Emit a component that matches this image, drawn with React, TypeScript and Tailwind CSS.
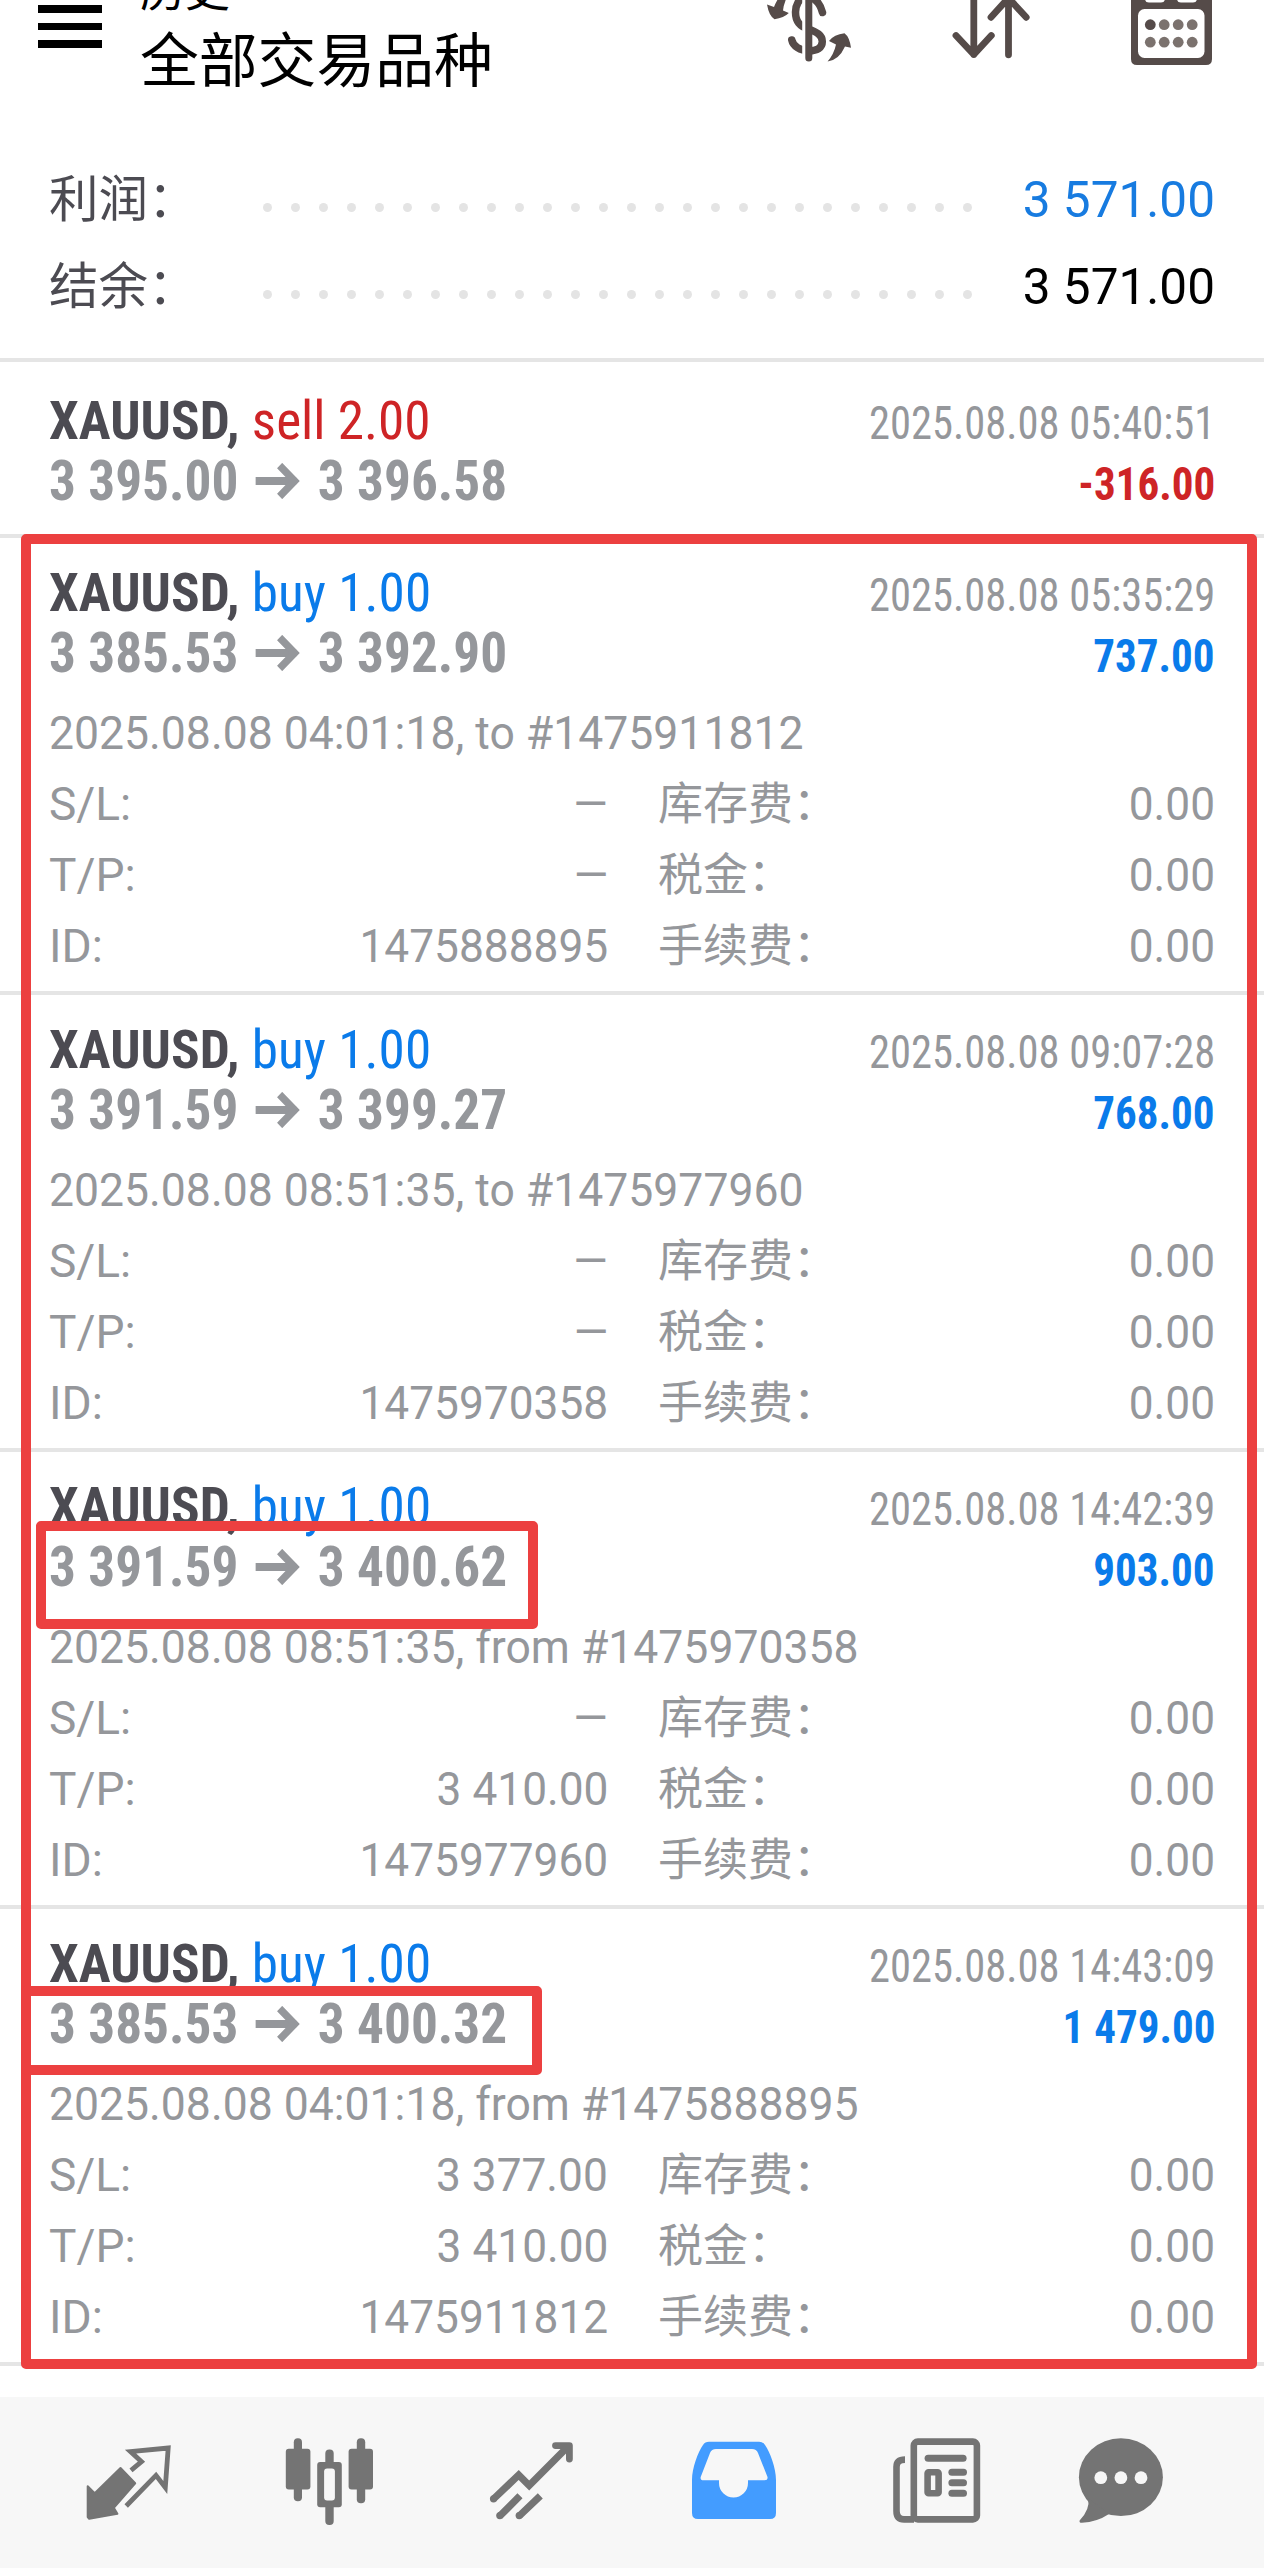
import type { ReactNode } from 'react'

type Trade = {
  side: 'buy' | 'sell'
  volume: string
  open: string
  close: string
  time: string
  profit: string
  details?: {
    note: string
    sl: string
    tp: string
    id: string
  }
}

const trades: Trade[] = [
  {
    side: 'sell',
    volume: '2.00',
    open: '3 395.00',
    close: '3 396.58',
    time: '2025.08.08 05:40:51',
    profit: '-316.00',
  },
  {
    side: 'buy',
    volume: '1.00',
    open: '3 385.53',
    close: '3 392.90',
    time: '2025.08.08 05:35:29',
    profit: '737.00',
    details: { note: '2025.08.08 04:01:18, to #1475911812', sl: '—', tp: '—', id: '1475888895' },
  },
  {
    side: 'buy',
    volume: '1.00',
    open: '3 391.59',
    close: '3 399.27',
    time: '2025.08.08 09:07:28',
    profit: '768.00',
    details: { note: '2025.08.08 08:51:35, to #1475977960', sl: '—', tp: '—', id: '1475970358' },
  },
  {
    side: 'buy',
    volume: '1.00',
    open: '3 391.59',
    close: '3 400.62',
    time: '2025.08.08 14:42:39',
    profit: '903.00',
    details: { note: '2025.08.08 08:51:35, from #1475970358', sl: '—', tp: '3 410.00', id: '1475977960' },
  },
  {
    side: 'buy',
    volume: '1.00',
    open: '3 385.53',
    close: '3 400.32',
    time: '2025.08.08 14:43:09',
    profit: '1 479.00',
    details: { note: '2025.08.08 04:01:18, from #1475888895', sl: '3 377.00', tp: '3 410.00', id: '1475911812' },
  },
]

const Header = () => {
  return (
    <header className="flex h-[157px] items-start pl-[38px] pr-[50px] text-black">
      <div className="mt-[5px] flex w-[64px] flex-col gap-[10px]">
        <span className="h-[7.6px] bg-black" />
        <span className="h-[7.6px] bg-black" />
        <span className="h-[7.6px] bg-black" />
      </div>
      <div className="-mt-[38px] ml-[38px] grow">
        <div className="text-[45px] leading-[60px]">历史</div>
        <h1 className="text-[58.8px] leading-[80px]">全部交易品种</h1>
      </div>
      <svg className="h-[66px] w-[90px]" viewBox="764 0 90 66" fill="#554b49">
        <path
          d="M822.5 12.5 C820 3 815 -3 806 -3 C799 -3 795.5 6 795.5 12 C795.5 22 800 26 808 29 C817 32 822.3 35 822.3 41.5 C822.3 48 817 50.8 809 50.8 C800 50.8 793 46 791.8 40"
          fill="none"
          stroke="#554b49"
          strokeWidth="7.5"
          strokeLinecap="round"
        />
        <rect x="802.2" y="-5" width="4" height="64" fill="#fff" />
        <rect x="805.3" y="-6" width="7" height="67.5" rx="3.5" />
        <path d="M778.5 -2 H786.5 Q783.5 5 783 10.5 L788.8 13 Q784 18 774.5 19.2 Q769 16 767 4.5 L774 7 Q775 4 778.5 -2Z" />
        <path d="M844.5 33.3 Q849.5 37 851 47.8 L845 46.5 Q839 60 827.6 61.5 Q834 54 836 44.5 L829 41 Q834 34.5 844.5 33.3Z" />
      </svg>
      <svg
        className="ml-[98px] h-[66px] w-[80px]"
        viewBox="952 0 80 66"
        fill="none"
        stroke="#554b49"
        strokeWidth="6.8"
        strokeLinecap="round"
        strokeLinejoin="round"
      >
        <path d="M973.8 -5 V54.5 M956 35.5 L973.8 54.5 L991.3 35.5" />
        <path d="M1008.5 54.8 V-2 M991 17.3 L1008.5 -2 L1026.2 17.3" />
      </svg>
      <svg className="ml-[99px] h-[66px] w-[83px]" viewBox="1131 0 83 66" fill="#7b726e">
        <path d="M1131 -5 H1212 V59 Q1212 65 1206 65 H1137 Q1131 65 1131 59Z" fill="#554b49" />
        <rect x="1138" y="9" width="66.5" height="49" rx="6.5" fill="#fff" />
        <rect x="1145" y="-8" width="20" height="10.5" rx="4" fill="#fff" />
        <rect x="1177" y="-8" width="20" height="10.5" rx="4" fill="#fff" />
        <circle cx="1150.3" cy="24.7" r="5.4" fill="#554b49" />
        <circle cx="1164.2" cy="24.7" r="5.4" />
        <circle cx="1178.2" cy="24.7" r="5.4" />
        <circle cx="1192.2" cy="24.7" r="5.4" />
        <circle cx="1150.3" cy="42.2" r="5.4" />
        <circle cx="1164.2" cy="42.2" r="5.4" />
        <circle cx="1178.2" cy="42.2" r="5.4" />
        <circle cx="1192.2" cy="42.2" r="5.4" />
      </svg>
    </header>
  )
}

const SummaryRow = ({ label, value, color }: { label: string; value: string; color: string }) => {
  return (
    <div className="flex h-[87px] items-center text-[49.5px] leading-[87px]">
      <span className="w-[214px] text-[#4c4b52]">{label}</span>
      <span className="mt-[13px] flex gap-[19px]">
        {Array.from({ length: 26 }, (_, i) => (
          <span key={i} className="size-[9px] rounded-full bg-[#e4e4e4]" />
        ))}
      </span>
      <span className={`grow text-right ${color}`}>{value}</span>
    </div>
  )
}

const DetailRow = ({ label, value, feeLabel }: { label: string; value: string; feeLabel: string }) => {
  return (
    <div className="flex h-[71px] leading-[71px]">
      <span>{label}</span>
      <span className="grow origin-right scale-x-[0.962] text-right">{value}</span>
      <span className="ml-[50px] w-[360px] text-[45px]">{feeLabel}</span>
      <span className="w-[197px] origin-right scale-x-[0.962] text-right">0.00</span>
    </div>
  )
}

const PriceArrow = () => (
  <svg className="mx-[18px] h-[36px] w-[46px]" viewBox="0 0 46 36" fill="none" stroke="#95979b" strokeWidth="8">
    <path d="M0 18 H42" />
    <path d="M25 2.5 L40.5 18 L25 33.5" strokeWidth="7.5" />
  </svg>
)

const TradeCard = ({ trade }: { trade: Trade }) => {
  const sideColor = trade.side === 'buy' ? 'text-[#0a7bea]' : 'text-[#ce2426]'
  const profitColor = trade.profit.startsWith('-') ? 'text-[#ce2426]' : 'text-[#0a7bea]'
  const { details } = trade

  return (
    <article
      className={`border-b-4 border-[#e5e5e5] px-[49px] text-[#95979b] ${details ? 'h-[457px] pt-[22px]' : 'h-[176px] pt-[26px]'}`}
    >
      <div className="flex h-[61px] items-baseline justify-between font-['Roboto_Condensed'] leading-[64px]">
        <span className="origin-left scale-x-[0.977] text-[54.5px]">
          <b className="text-[#4c4b52]">XAUUSD,</b>{' '}
          <span className={sideColor}>
            {trade.side} {trade.volume}
          </span>
        </span>
        <time className="origin-right scale-x-[0.925] text-[46px]">{trade.time}</time>
      </div>
      <div className="flex h-[60px] items-baseline justify-between font-['Roboto_Condensed'] font-bold leading-[64px]">
        <span className="flex origin-left scale-x-[0.969] items-center text-[55px]">
          {trade.open}
          <PriceArrow />
          {trade.close}
        </span>
        <span className={`origin-right scale-x-[0.936] text-[46px] ${profitColor}`}>{trade.profit}</span>
      </div>
      {details && (
        <div className="mt-[16.5px] text-[46px]">
          <p className="h-[71px] origin-left scale-x-[0.968] leading-[71px]">{details.note}</p>
          <DetailRow label="S/L:" value={details.sl} feeLabel="库存费：" />
          <DetailRow label="T/P:" value={details.tp} feeLabel="税金：" />
          <DetailRow label="ID:" value={details.id} feeLabel="手续费：" />
        </div>
      )}
    </article>
  )
}

const NavIcon = ({ active, className, children }: { active?: boolean; className?: string; children: ReactNode }) => (
  <svg
    className={`size-[100px] ${active ? 'text-[#439cff]' : 'text-[#747474]'} ${className ?? ''}`}
    viewBox="0 0 100 100"
    fill="currentColor"
  >
    {children}
  </svg>
)

const BottomNav = () => {
  return (
    <nav className="flex h-[171px] gap-[102px] bg-[#f7f7f7] pl-[78px] pt-[35px]">
      <NavIcon>
        <path
          d="M9.7 54.3 L16.7 61.3 L42.5 36 L57.2 51.3 L35.8 75.8 L39.4 81.8 L11.2 86.8 L9.7 85Z"
          stroke="currentColor"
          strokeWidth="2"
          strokeLinejoin="round"
        />
        <path
          d="M53 38.3 L63.5 29.7 L52.5 19.6 L90.2 16 L87.3 55.5 L78 43.3 L48.2 74"
          fill="none"
          stroke="currentColor"
          strokeWidth="4.8"
        />
      </NavIcon>
      <NavIcon>
        <rect x="13.8" y="6.3" width="8.2" height="63" rx="4" />
        <rect x="5.8" y="16.7" width="24.6" height="40.8" rx="3" />
        <rect x="45.3" y="17.5" width="8.4" height="75.5" rx="4" />
        <rect x="37.2" y="30" width="24.6" height="45.3" rx="3" />
        <rect x="44.1" y="36.5" width="10.8" height="32" rx="3" fill="#f7f7f7" />
        <rect x="76.8" y="6.3" width="8.4" height="65" rx="4" />
        <rect x="68.6" y="16.7" width="24.4" height="40.8" rx="3" />
      </NavIcon>
      <NavIcon>
        <g fill="none" stroke="currentColor" strokeWidth="7.2">
          <path d="M11.5 67 L36.7 43 L47.2 53.5 L86 14.5" />
          <path d="M73.5 13.6 H87.4 V27" strokeWidth="6.8" strokeLinecap="round" strokeLinejoin="round" />
          <path d="M17.8 84 L38 63.8 M37.2 84 L58.3 63.8" />
        </g>
        <circle cx="11.5" cy="66.8" r="3.6" />
        <circle cx="17.8" cy="83.6" r="3.6" />
        <circle cx="37.2" cy="83.6" r="3.6" />
      </NavIcon>
      <NavIcon active>
        <path
          fillRule="evenodd"
          d="M8 48 C8 36 14 20 19 13 Q21 9.7 25 9.7 H75 Q79 9.7 81 13 C86 20 92 36 92 48 V81 Q92 87 86 87 H14 Q8 87 8 81Z M32 17 H68 Q72.5 17 74 21 L83.5 45 Q84 48.3 80.5 48.3 H64 V51 A14.5 14.5 0 0 1 35 51 V48.3 H19.5 Q16 48.3 16.7 45 L26 21 Q27.5 17 32 17Z"
        />
      </NavIcon>
      <NavIcon>
        <g fill="none" stroke="currentColor" strokeWidth="6.6">
          <rect x="27.8" y="9.6" width="63.1" height="77.8" rx="4" />
          <path d="M19 27.6 Q10.5 27.6 10.5 35 V79 Q10.5 87.4 18 87.4 H28" />
          <rect x="41.6" y="40.2" width="11" height="21" rx="1" />
        </g>
        <rect x="38.6" y="22.7" width="42" height="7" rx="3.5" />
        <rect x="62.4" y="36.7" width="18.6" height="7" rx="3.5" />
        <rect x="62.4" y="47.2" width="18.6" height="7" rx="3.5" />
        <rect x="62.4" y="57.7" width="18.6" height="7" rx="3.5" />
      </NavIcon>
      <NavIcon className="-ml-[17px]">
        <ellipse cx="49.9" cy="45.2" rx="42" ry="38.9" />
        <path d="M17 66 Q19.5 77 8.6 88.5 Q8 91 11 90.8 Q26 90 38 82Z" />
        <g fill="#f7f7f7">
          <circle cx="29.8" cy="45.7" r="6.4" />
          <circle cx="49.9" cy="45.7" r="6.4" />
          <circle cx="70" cy="45.7" r="6.4" />
        </g>
      </NavIcon>
    </nav>
  )
}

export default function App() {
  return (
    <div className="relative h-[2568px] w-[1264px] overflow-hidden bg-white font-[Roboto,'Noto_Sans_CJK_SC',sans-serif]">
      <Header />
      <section className="h-[205px] border-b-4 border-[#e5e5e5] px-[49px]">
        <SummaryRow label="利润：" value="3 571.00" color="text-[#177be0]" />
        <SummaryRow label="结余：" value="3 571.00" color="text-black" />
      </section>
      <main className="h-[2035px]">
        {trades.map((trade) => (
          <TradeCard key={trade.time} trade={trade} />
        ))}
      </main>
      <BottomNav />

      {/* highlight boxes over the list */}
      <div className="absolute left-[20.5px] top-[534px] h-[1835px] w-[1236.5px] rounded-[5px] border-[10px] border-[#ec4040]" />
      <div className="absolute left-[36px] top-[1520.5px] h-[108px] w-[502px] rounded-[5px] border-[10px] border-[#ec4040]" />
      <div className="absolute left-[20.5px] top-[1985.5px] h-[89px] w-[521px] rounded-[5px] border-[10px] border-[#ec4040]" />
    </div>
  )
}
